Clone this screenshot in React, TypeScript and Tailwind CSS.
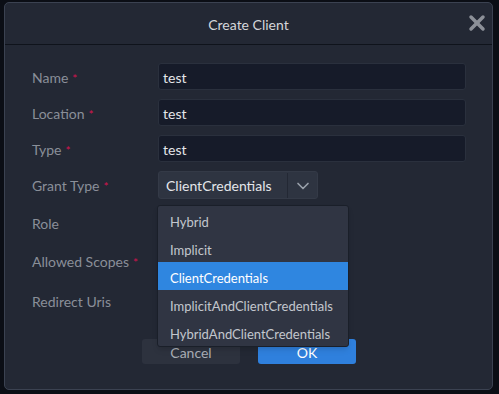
import { X, ChevronDown } from 'lucide-react';

const options = [
  'Hybrid',
  'Implicit',
  'ClientCredentials',
  'ImplicitAndClientCredentials',
  'HybridAndClientCredentials',
];

function Label({ text, required }: { text: string; required?: boolean }) {
  return (
    <div className="w-[126px] shrink-0 pt-[1px] text-[14px] text-[#8a8f99]">
      {text}
      {required && <span className="ml-[4px] text-[12px] text-[#d3134f]">*</span>}
    </div>
  );
}

function TextRow({ label, value }: { label: string; value: string }) {
  return (
    <div className="flex h-[27px] items-center">
      <Label text={label} required />
      <div className="flex h-[27px] w-[308px] items-center rounded-[3px] border border-[#2a303d] bg-[#161b29] px-[4px] pt-[1px] text-[14px] text-[#e4e6ea]">
        {value}
      </div>
    </div>
  );
}

export default function App() {
  return (
    <div className="h-[394px] w-[499px] bg-[#0b0e15] pl-[4px] pt-[2px] font-['Lato',sans-serif]">
      <div className="flex h-[388px] w-[489px] flex-col rounded-[5px] border border-[#3b4251] bg-[#232834]">
        {/* Header */}
        <div className="relative flex h-[42px] items-center justify-center border-b border-[#0f131b] pt-[1px] text-[14px] text-[#d4d6da]">
          Create Client
          <X className="absolute right-[3px] top-[8px] h-[24px] w-[24px] text-[#8c9098]" strokeWidth={3.5} />
        </div>

        {/* Form */}
        <div className="flex flex-col gap-[9px] pl-[27px] pt-[18px]">
          <TextRow label="Name" value="test" />
          <TextRow label="Location" value="test" />
          <TextRow label="Type" value="test" />

          <div className="flex h-[28px] items-center">
            <Label text="Grant Type" required />
            <div className="relative">
              <div className="flex h-[28px] w-[160px] items-center rounded-[3px] border border-[#343a47] bg-[#2e3441] pt-[1px] text-[14px] text-[#e4e6ea]">
                <div className="flex-1 pl-[7px]">ClientCredentials</div>
                <div className="flex h-full w-[30px] items-center justify-center border-l border-[#232834]">
                  <ChevronDown className="h-[20px] w-[20px] text-[#9aa0aa]" strokeWidth={2} />
                </div>
              </div>

              {/* Open dropdown */}
              <div className="absolute left-[-1px] top-[34px] z-10 w-[192px] rounded-[3px] border border-[#1a1f29] bg-[#303543] shadow-md">
                {options.map((o) => (
                  <div
                    key={o}
                    className={`flex h-[28px] items-center pl-[12px] pt-[6px] text-[13px] ${
                      o === 'ClientCredentials' ? 'bg-[#2f86e0] text-white' : 'text-[#c3c7ce]'
                    }`}
                  >
                    {o}
                  </div>
                ))}
              </div>
            </div>
          </div>

          <div className="mt-[1px] flex h-[28px] items-center">
            <Label text="Role" />
          </div>
          <div className="mt-[1px] flex h-[28px] items-center">
            <Label text="Allowed Scopes" required />
          </div>
          <div className="mt-[3px] flex h-[28px] items-center">
            <Label text="Redirect Uris" />
          </div>

          {/* Buttons */}
          <div className="ml-[110px] mt-[15px] flex gap-[18px]">
            <div className="flex h-[25px] w-[98px] items-center justify-center rounded-[3px] bg-[#2d323e] pt-[1px] text-[14px] text-[#a9adb5]">
              Cancel
            </div>
            <div className="flex h-[25px] w-[98px] items-center justify-center rounded-[3px] bg-[#2f80dd] pt-[1px] text-[14px] text-white">
              OK
            </div>
          </div>
        </div>
      </div>
    </div>
  );
}
